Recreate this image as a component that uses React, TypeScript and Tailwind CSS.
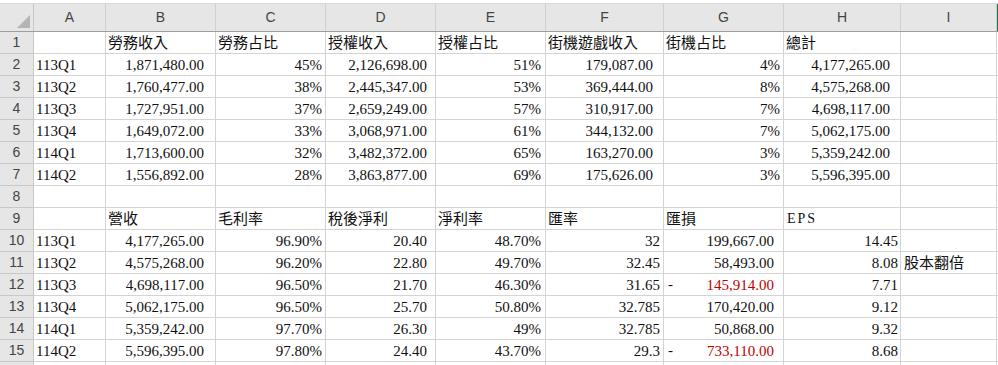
import React from "react";

type Cell = { t: string; align?: "l" | "r"; pr?: string; red?: boolean; dash?: boolean; wide?: boolean };

const cols = ["A", "B", "C", "D", "E", "F", "G", "H", "I"];

const l = (t: string): Cell => ({ t, align: "l" });
const n = (t: string, pr: string): Cell => ({ t, align: "r", pr });
const neg = (t: string, pr: string): Cell => ({ t, align: "r", pr, red: true, dash: true });
const e: Cell = { t: "" };

// accounting columns carry a trailing space, so their right padding differs
const top: [string, string, string, string, string, string, string][] = [
  ["113Q1", "1,871,480.00", "45%", "2,126,698.00", "51%", "179,087.00", "4%"],
  ["113Q2", "1,760,477.00", "38%", "2,445,347.00", "53%", "369,444.00", "8%"],
  ["113Q3", "1,727,951.00", "37%", "2,659,249.00", "57%", "310,917.00", "7%"],
  ["113Q4", "1,649,072.00", "33%", "3,068,971.00", "61%", "344,132.00", "7%"],
  ["114Q1", "1,713,600.00", "32%", "3,482,372.00", "65%", "163,270.00", "3%"],
  ["114Q2", "1,556,892.00", "28%", "3,863,877.00", "69%", "175,626.00", "3%"],
];
const totals = ["4,177,265.00", "4,575,268.00", "4,698,117.00", "5,062,175.00", "5,359,242.00", "5,596,395.00"];

const bottom = [
  ["113Q1", "4,177,265.00", "96.90%", "20.40", "48.70%", "32", "199,667.00", "14.45", ""],
  ["113Q2", "4,575,268.00", "96.20%", "22.80", "49.70%", "32.45", "58,493.00", "8.08", "股本翻倍"],
  ["113Q3", "4,698,117.00", "96.50%", "21.70", "46.30%", "31.65", "-145,914.00", "7.71", ""],
  ["113Q4", "5,062,175.00", "96.50%", "25.70", "50.80%", "32.785", "170,420.00", "9.12", ""],
  ["114Q1", "5,359,242.00", "97.70%", "26.30", "49%", "32.785", "50,868.00", "9.32", ""],
  ["114Q2", "5,596,395.00", "97.80%", "24.40", "43.70%", "29.3", "-733,110.00", "8.68", ""],
];

const rows: Cell[][] = [
  [e, l("勞務收入"), l("勞務占比"), l("授權收入"), l("授權占比"), l("街機遊戲收入"), l("街機占比"), l("總計"), e],
  ...top.map((r, i) => [
    l(r[0]),
    n(r[1], "pr-[11px]"),
    n(r[2], "pr-[3px]"),
    n(r[3], "pr-[8px]"),
    n(r[4], "pr-[4px]"),
    n(r[5], "pr-[10px]"),
    n(r[6], "pr-[3px]"),
    n(totals[i], "pr-[10px]"),
    e,
  ]),
  [e, e, e, e, e, e, e, e, e],
  [e, l("營收"), l("毛利率"), l("稅後淨利"), l("淨利率"), l("匯率"), l("匯損"), { t: "EPS", align: "l", wide: true }, e],
  ...bottom.map((r) => [
    l(r[0]),
    n(r[1], "pr-[11px]"),
    n(r[2], "pr-[3px]"),
    n(r[3], "pr-[8px]"),
    n(r[4], "pr-[4px]"),
    n(r[5], "pr-[3px]"),
    r[6].startsWith("-") ? neg(r[6].slice(1), "pr-[9px]") : n(r[6], "pr-[9px]"),
    n(r[7], "pr-[2px]"),
    r[8] ? { t: r[8], align: "l" as const, pr: "pl-[3px]" } : e,
  ]),
];

const grid = "grid grid-cols-[34px_72px_110px_110px_110px_110px_118px_120px_117px_96px_1fr]";

function DataCell({ c }: { c: Cell }) {
  return (
    <div
      className={`relative flex h-[22px] items-end overflow-visible whitespace-nowrap border-b border-r border-[#d4d4d4] bg-white pb-[1px] text-[15px] leading-[18px] ${
        c.align === "r" ? "justify-end" : "justify-start pl-[2px]"
      } ${c.pr ?? ""} ${c.red ? "text-[#c00000]" : "text-[#111]"}`}
    >
      {c.dash && <span className="absolute bottom-[2px] left-[4px] text-[#111]">-</span>}
      {c.wide ? <span className="pl-[1px] text-[14px] tracking-[2px]">{c.t}</span> : c.t}
    </div>
  );
}

export default function App() {
  return (
    <div className="h-[365px] w-[998px] overflow-hidden bg-white font-['Liberation_Serif','Noto_Sans_CJK_TC',serif]">
      <div className="h-[4px] border-b border-[#d9d9d9] bg-white" />
      {/* column headers */}
      <div className={`${grid} h-[28px] border-b border-[#9e9e9e] bg-[#e6e6e6] font-['Liberation_Sans',sans-serif] text-[14px] text-[#444]`}>
        <div className="relative border-r border-[#c8c8c8]">
          <div className="absolute bottom-[3px] right-[3px] h-0 w-0 border-b-[13px] border-l-[13px] border-b-[#b4b4b4] border-l-transparent" />
        </div>
        {cols.map((c) => (
          <div key={c} className="flex items-center justify-center border-r border-[#d0d0d0]">
            {c}
          </div>
        ))}
        <div className="border-l-2 border-[#217346]" />
      </div>
      {rows.map((r, i) => (
        <div key={i} className={grid}>
          <div className="flex h-[22px] items-center justify-center border-b border-r border-[#c8c8c8] bg-[#e6e6e6] font-['Liberation_Sans',sans-serif] text-[14px] text-[#444]">
            {i + 1}
          </div>
          {r.map((c, j) => (
            <DataCell key={j} c={c} />
          ))}
          <div className="h-[22px] border-b border-[#d4d4d4] bg-white" />
        </div>
      ))}
      <div className={grid}>
        <div className="h-[22px] border-r border-[#c8c8c8] bg-[#e6e6e6]" />
        {cols.map((c) => (
          <div key={c} className="h-[22px] border-r border-[#d4d4d4]" />
        ))}
      </div>
    </div>
  );
}
